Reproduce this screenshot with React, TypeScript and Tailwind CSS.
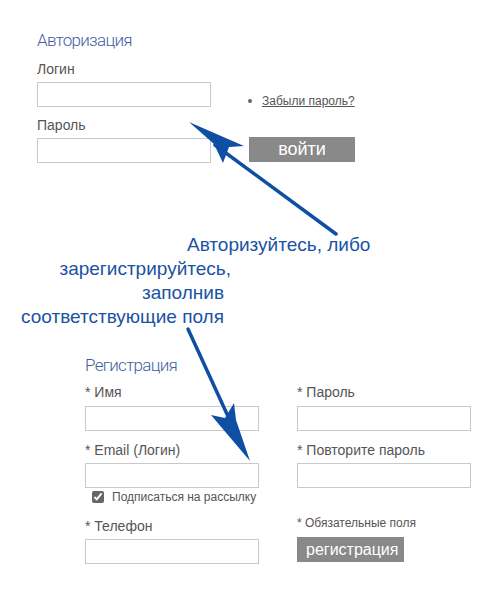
import React from 'react'

const inputCls = 'block w-[174px] h-[25px] border border-[#c9c9c9] bg-white outline-none'
const labelCls = 'block text-[14px] leading-[16px] text-[#555]'
const headCls = "font-['Roboto'] font-light text-[17px] leading-[20px] tracking-[-0.7px] text-[#3f5d9f]"

function Arrows() {
  return (
    <svg className="absolute inset-0 pointer-events-none" width="500" height="600" viewBox="0 0 500 600">
      {/* arrow to login form */}
      <line x1="336" y1="234" x2="215" y2="145" stroke="#0f4fa3" strokeWidth="3.5" strokeLinecap="round" />
      <polygon points="189,122 244,146 229,147 223,163 214,144" fill="#0f4fa3" />
      {/* arrow to registration form */}
      <line x1="188" y1="329" x2="232" y2="425" stroke="#0f4fa3" strokeWidth="3.5" strokeLinecap="round" />
      <polygon points="250,461 211,415 225,418 234,403 236,420" fill="#0f4fa3" />
    </svg>
  )
}

export default function App() {
  return (
    <div className="relative w-[500px] h-[600px] bg-white font-['Liberation_Sans',Arial,sans-serif] overflow-hidden">
      {/* Авторизация */}
      <section className="pl-[37px] pt-[30px]">
        <h2 className={headCls}>Авторизация</h2>
        <div className="flex">
          <div className="w-[174px]">
            <label className={`${labelCls} mt-[11px]`}>Логин</label>
            <input className={`${inputCls} mt-[5px]`} />
            <label className={`${labelCls} mt-[10px]`}>Пароль</label>
            <input type="password" className={`${inputCls} mt-[5px]`} />
          </div>
          <div className="ml-[37px] flex flex-col">
            <ul className="mt-[44px] flex items-center gap-[10px] text-[12px] leading-[14px] text-[#555]">
              <li className="flex items-center gap-[10px]">
                <span className="w-[4px] h-[4px] rounded-full bg-[#666]" />
                <a href="#" className="underline">Забыли пароль?</a>
              </li>
            </ul>
            <button className="mt-[29px] ml-[1px] w-[106px] h-[25px] bg-[#898989] text-white text-[18px] leading-[25px]">
              войти
            </button>
          </div>
        </div>
      </section>

      {/* подсказка */}
      <div className="mt-[70px] text-[19px] leading-[24px] text-[#1b52a3]">
        <p className="pl-[187px]">Авторизуйтесь, либо</p>
        <p className="w-[231px] text-right">зарегистрируйтесь,</p>
        <p className="w-[224px] text-right">заполнив</p>
        <p className="w-[224px] text-right">соответствующие поля</p>
      </div>

      {/* Регистрация */}
      <section className="pl-[85px] mt-[26px]">
        <h2 className={headCls}>Регистрация</h2>
        <div className="flex gap-[38px]">
          <div className="w-[174px]">
            <label className={`${labelCls} mt-[9px]`}>* Имя</label>
            <input className={`${inputCls} mt-[6px]`} />
            <label className={`${labelCls} mt-[11px]`}>* Email (Логин)</label>
            <input className={`${inputCls} mt-[5px]`} />
            <label className="flex items-center gap-[8px] pl-[7px] mt-[2px] text-[12px] leading-[14px] text-[#555]">
              <input type="checkbox" defaultChecked className="w-[12px] h-[12px] m-0 accent-[#666]" />
              Подписаться на рассылку
            </label>
            <label className={`${labelCls} mt-[14px]`}>* Телефон</label>
            <input className={`${inputCls} mt-[5px]`} />
          </div>
          <div className="w-[174px]">
            <label className={`${labelCls} mt-[9px]`}>* Пароль</label>
            <input type="password" className={`${inputCls} mt-[6px]`} />
            <label className={`${labelCls} mt-[11px]`}>* Повторите пароль</label>
            <input type="password" className={`${inputCls} mt-[5px]`} />
            <p className="mt-[28px] text-[12px] leading-[14px] text-[#555]">* Обязательные поля</p>
            <button className="mt-[7px] w-[107px] h-[25px] bg-[#898989] text-white text-[16px] leading-[25px] px-[9px] text-left">
              регистрация
            </button>
          </div>
        </div>
      </section>

      <Arrows />
    </div>
  )
}
